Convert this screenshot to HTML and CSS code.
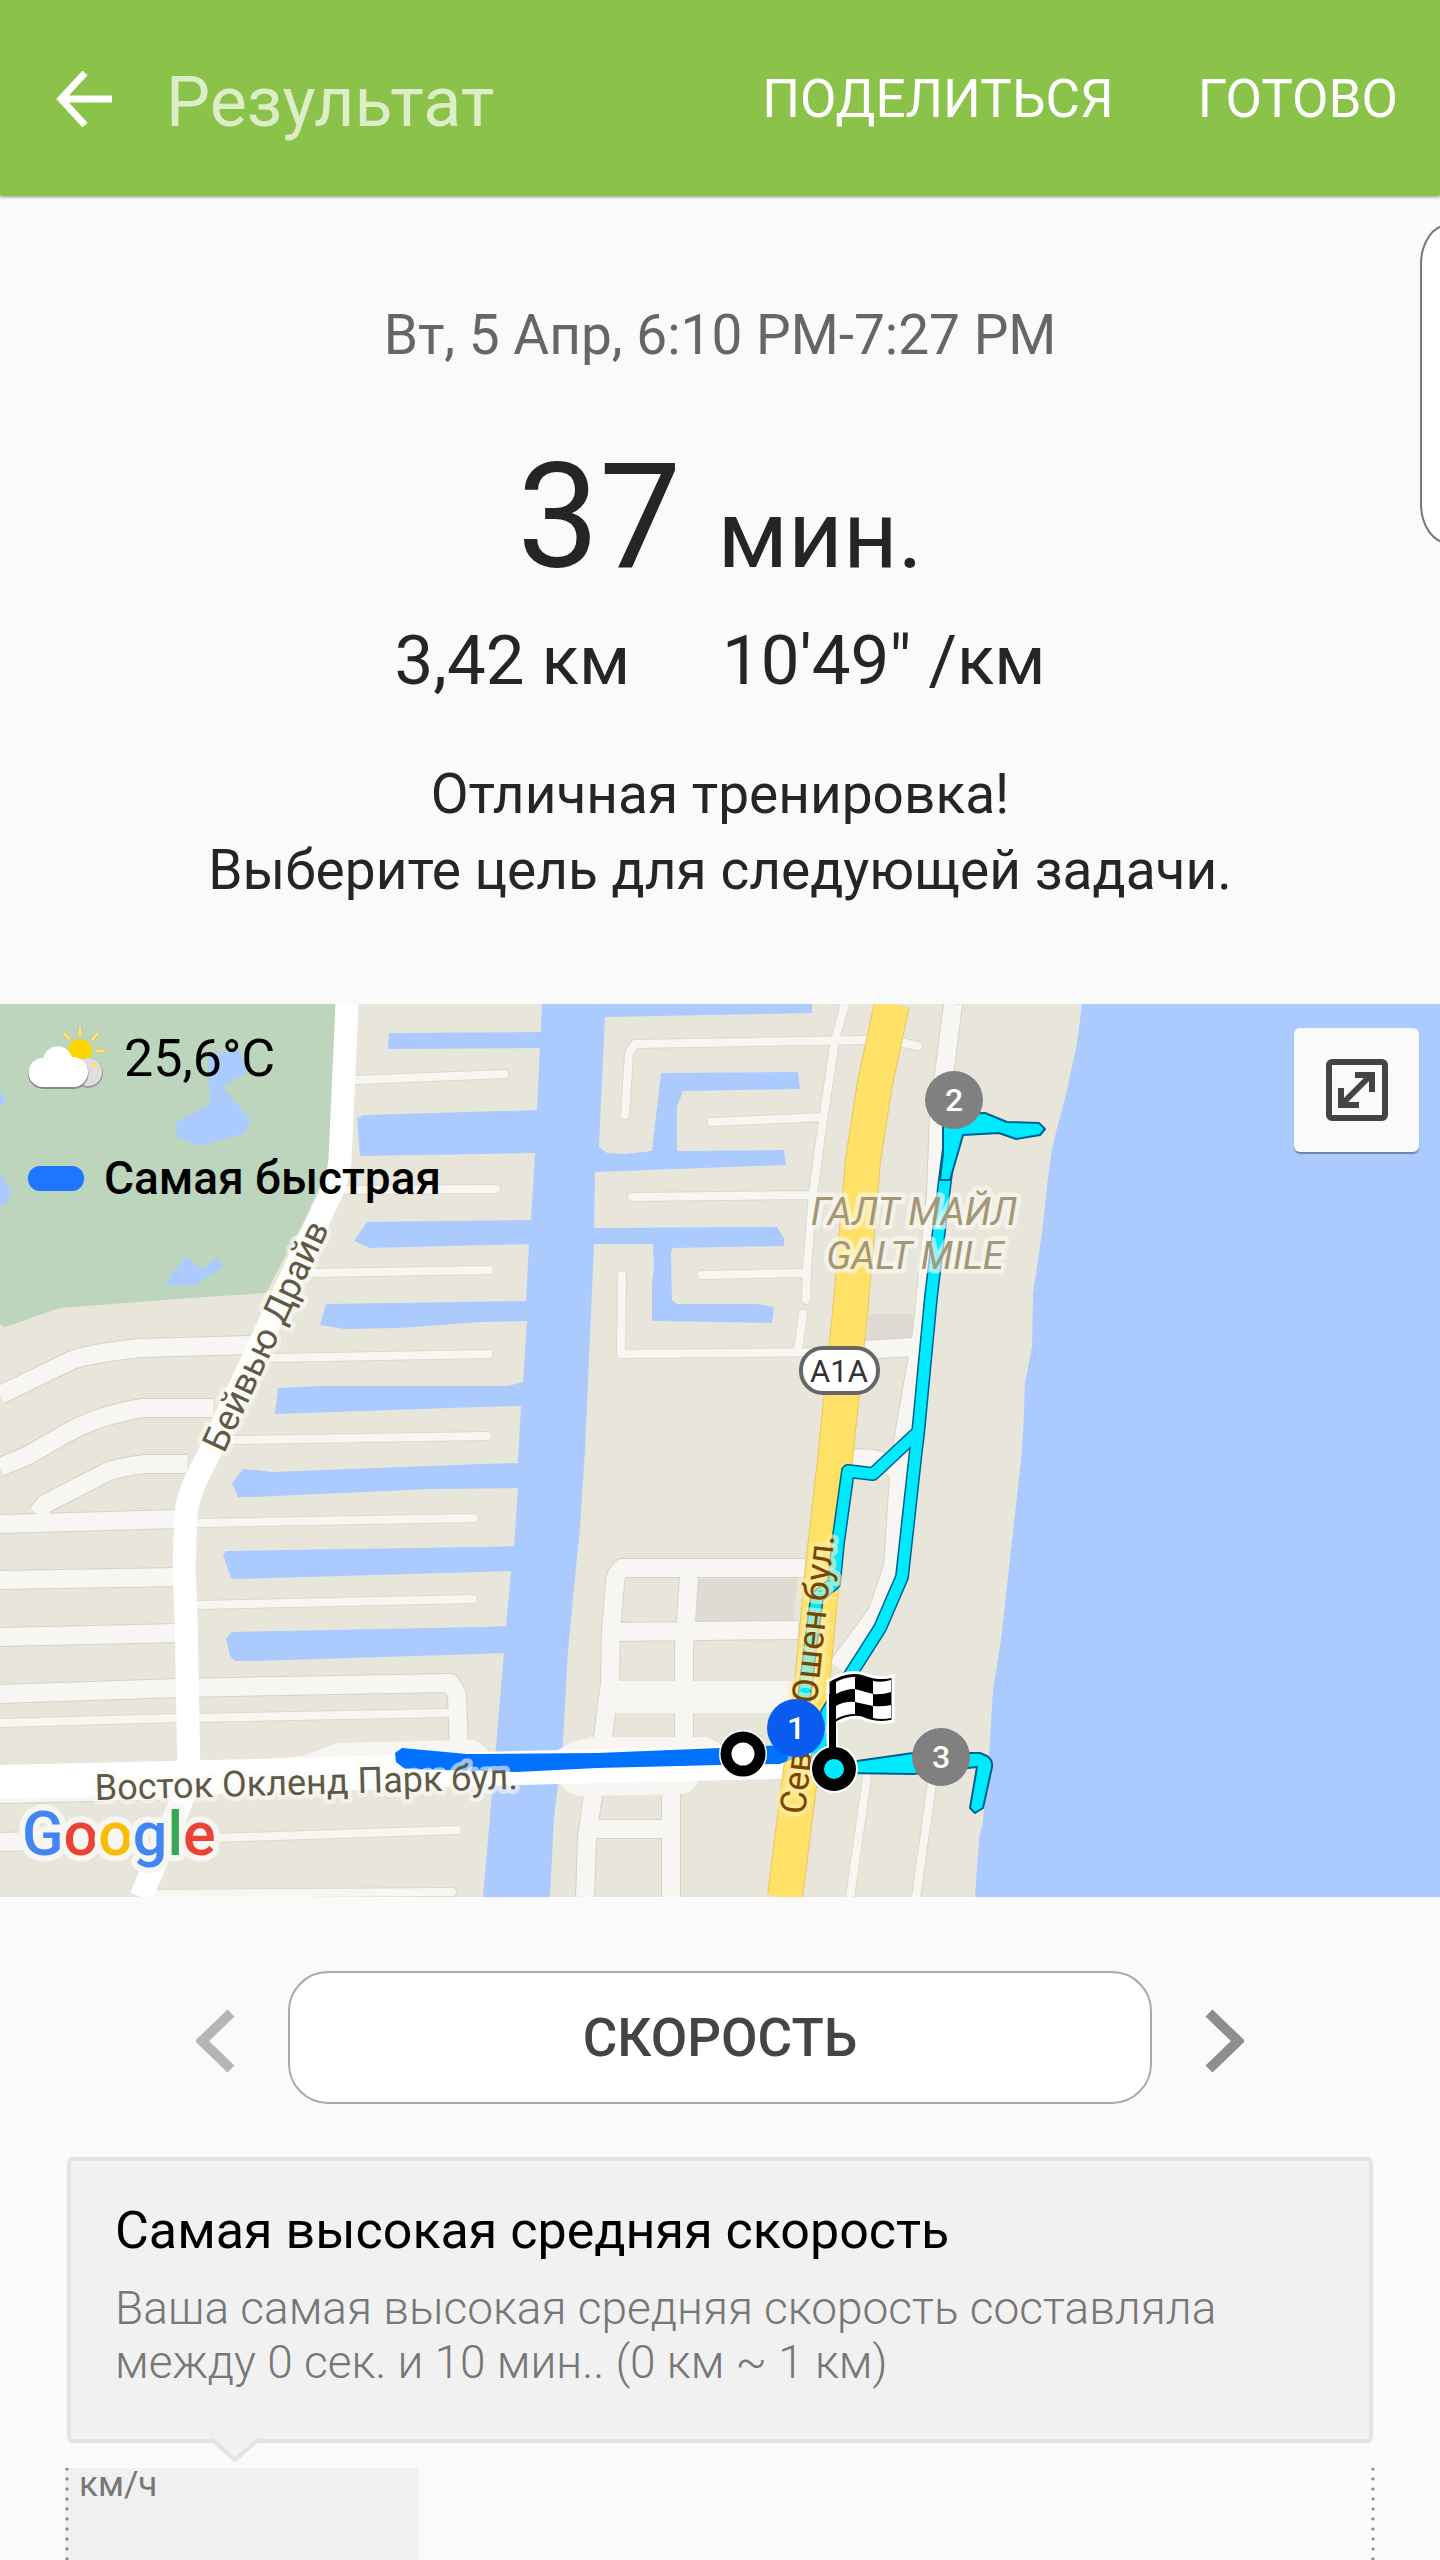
FILE: index.html
```html
<!DOCTYPE html>
<html lang="ru">
<head>
    <meta charset="UTF-8">
    <meta name="viewport" content="width=device-width, initial-scale=1.0">
    <title>Результат</title>
    <link rel="stylesheet" href="styles.css">
</head>
<body>
    <header class="topbar">
        <button class="back" aria-label="Назад">
            <svg width="56" height="56" viewBox="0 0 56 56">
                <path d="M29 2 L5 28 L29 54 M4 28 H56" fill="none" stroke="#fff" stroke-width="7"/>
            </svg>
        </button>
        <h1>Результат</h1>
        <button class="action">ПОДЕЛИТЬСЯ</button>
        <button class="action">ГОТОВО</button>
    </header>

    <div class="edge-handle"></div>

    <main>
        <section class="summary">
            <p class="date">Вт, 5 Апр, 6:10 PM-7:27 PM</p>
            <p class="duration">37 <span>мин.</span></p>
            <p class="stats"><span>3,42 км</span><span>10'49" /км</span></p>
            <p class="message">Отличная тренировка!<br>Выберите цель для следующей задачи.</p>
        </section>

        <section class="map">
            <svg class="map-canvas" viewBox="0 0 1440 893">
                <rect class="land" width="1440" height="893"/>

                <!-- park -->
                <path class="park" d="M0 0H336L330 160L305 215L266 289L190 294L60 304L5 323L0 320Z"/>

                <!-- ocean, canals and ponds -->
                <g class="water">
                    <path d="M1082 0L1077 39L1067 86L1062 106L1057 124L1052 146L1048 173L1042 229L1033 289L1032 343L1025 379L1023 429L1021 456L1001 636L993 686L989 753L983 816L979 836L975 893H1440V0Z"/>
                    <path d="M542 0L537 105L535 150L531 216L529 240L526 297L527 318L523 378L521 403L518 456L518 484L514 542L511 568L506 622L504 649L483 893H550L554 813L563 739L568 646L580 523L585 446L587 400L594 240V224L595 168L599 142L605 13L812 9V0Z"/>
                    <path d="M389 29L545 28V44L388 45Z"/>
                    <path d="M357 114L364 111L540 106V149L360 152Z"/>
                    <path d="M354 237L367 218L535 216V240L370 244Z"/>
                    <path d="M326 300L530 297V317L480 318L400 324L345 325L320 321Z"/>
                    <path d="M278 384L320 382L507 382L524 378V402L480 403L275 410Z"/>
                    <path d="M243 465L273 468L480 460L522 459V484L430 485L253 493H238L232 479Z"/>
                    <path d="M223 551L226 547L480 543L518 542L514 567L480 568L236 575L231 574Z"/>
                    <path d="M226 635L232 628L480 623L510 622L507 649L480 650L255 657H235L230 652Z"/>
                    <path d="M590 143L599 143L607 149L625 150L652 147L661 69L798 68L800 85L683 87L677 103V147L784 146L786 161L595 168L588 168Z"/>
                    <path d="M588 224H595L777 223L784 234V242L673 244L671 248L672 296L677 300L757 300L774 303L772 319L652 317V279L654 263L653 240H588Z"/>
                    <path d="M208 51L240 46L247 68L222 83L251 116L245 129L201 142L177 133L175 119L210 100Z"/>
                    <path d="M165 281L170 273L186 252L202 266L218 253L223 263L193 282Z"/>
                    <path d="M0 85L6 98L0 103ZM0 170L11 187L8 197L0 203Z"/>
                </g>

                <!-- buildings -->
                <path class="building" d="M698 575H797L794 616L696 618ZM869 310H913L912 335L865 338Z"/>

                <!-- side streets: the casing first, then the fill -->
                <defs>
                    <g id="streets" fill="none" stroke-linejoin="round">
                        <path d="M0 391L70 357Q85 350 140 344L250 341M0 463L27 452L65 430Q98 411 143 404L213 404M37 510L45 500L107 468Q120 463 145 460H187M0 520L178 515M0 576L178 573M0 633L178 629M0 690L178 684L450 679L457 690L459 746M0 838L130 834M0 790L180 786"/>
                        <path d="M830 348L912 343M953 0L939 110L936 190L922 329L905 426L899 471L893 563L877 609L837 663M850 455Q890 450 901 475"/>
                        <path d="M805 564H622Q615 570 615 579L611 626L610 679L602 740M612 628L798 626M689 573L684 646V740M593 790L587 834L585 893M671 790V893M588 825H671"/>
                    </g>
                    <g id="lanes" fill="none" stroke-linecap="round" stroke-linejoin="round">
                        <path d="M355 76L504 70M347 186L496 185M313 269L489 266M273 354L488 350M233 436L487 432M197 519L474 514M197 601L473 595M0 719L178 714M197 714L447 709M213 834L457 826M150 890L452 888"/>
                        <path d="M625 111L629 49L635 40L868 36M900 38L918 42M845 0L835 36L823 116L813 189L807 263L806 296M712 118L823 113M632 193L810 191M702 271L807 269M622 271L621 350L830 348M803 310L798 346M867 773L850 893M932 779L916 893"/>
                    </g>
                </defs>
                <use href="#streets" stroke="#d5d2c6" stroke-width="20"/>
                <use href="#lanes" stroke="#dbd9ce" stroke-width="10"/>
                <path d="M610 693H795" stroke="#f7f6f2" stroke-width="32"/>
                <use href="#streets" stroke="#f7f6f2" stroke-width="18"/>
                <use href="#lanes" stroke="#f7f6f2" stroke-width="8"/>
                <path fill="#f7f6f2" d="M273 755L303 752L337 739L475 736L488 746V765H273ZM558 746L572 738L593 733H707L720 740V774L700 776L690 788L680 790L580 792L568 788L558 777Z"/>

                <!-- main roads -->
                <path class="road" d="M347 0L340 156Q338 178 326 200L265 329L206 456Q189 486 186 509L184 563L186 613L189 770L182 796L141 893" stroke-width="23"/>
                <path class="road" d="M0 778L300 771L480 765L815 757" stroke-width="34"/>
                <path class="highway-edge" d="M892 0L875 79L863 156L850 309L835 456L823 563L812 679L795 813L785 893"/>
                <path class="highway" d="M892 0L875 79L863 156L850 309L835 456L823 563L812 679L795 813L785 893"/>

                <!-- track -->
                <path fill="#0072ff" d="M395 749L402 744L467 750H480L597 749L720 744L800 740V752L780 760L720 761L597 764L517 768L405 765L396 758Z"/>
                <defs>
                    <path id="track" d="M951 130L945 176L931 293L918 430L916 446L902 573L880 624L852 668L827 709L817 756M918 428L873 470L848 467L838 539L834 579L817 593L810 646L803 703" fill="none" stroke-linejoin="round"/>
                </defs>
                <use href="#track" stroke="#005f8f" stroke-width="14"/>
                <use href="#track" stroke="#00eaff" stroke-width="11"/>
                <g fill="#00eaff" stroke="#005f8f" stroke-width="2" stroke-linejoin="round">
                    <path d="M943 110L985 109L1007 118L1039 119L1045 125L1040 131L1016 135L999 129L963 131L957 152L950 176L940 176L943 150Z"/>
                    <path d="M845 758L857 757L913 749H980L987 752Q993 756 992 763L983 804L975 809L970 804L977 763L913 770L845 769Z"/>
                </g>

                <!-- labels -->
                <g class="label area">
                    <text x="914" y="221" text-anchor="middle">ГАЛТ МАЙЛ</text>
                    <text x="915" y="265" text-anchor="middle">GALT MILE</text>
                </g>
                <text class="label" transform="translate(224 450) rotate(-65)">Бейвью Драйв</text>
                <text class="label" transform="translate(95 796) rotate(-1.5)">Восток Окленд Парк бул.</text>
                <text class="label avenue" transform="translate(805 811) rotate(-84)">Север Ошен бул.</text>

                <rect x="801" y="344" width="77" height="45" rx="22" fill="#fff" stroke="#666" stroke-width="4"/>
                <text class="shield" x="839" y="378" text-anchor="middle">A1A</text>

                <!-- kilometre marks -->
                <g class="mark">
                    <circle cx="954" cy="96" r="29" fill="#808080"/>
                    <text x="954" y="107">2</text>
                    <circle cx="941" cy="753" r="29" fill="#808080"/>
                    <text x="941" y="764">3</text>
                    <circle cx="796" cy="724" r="29" fill="#0a5cf0"/>
                    <text x="796" y="735">1</text>
                </g>

                <!-- start and finish -->
                <circle cx="743" cy="750" r="17" fill="#fff" stroke="#fff" stroke-width="14"/>
                <circle cx="743" cy="750" r="17" fill="#fff" stroke="#000" stroke-width="11"/>
                <path d="M828 745V677Q848 665 864 670Q880 676 893 672V717Q878 721 862 714Q850 711 836 719V745Z" stroke="#fff" stroke-width="3"/>
                <circle cx="834" cy="765" r="17" fill="#fff" stroke="#fff" stroke-width="14"/>
                <circle cx="834" cy="765" r="16" fill="#00eaff" stroke="#000" stroke-width="12"/>
                <path d="M829 690h7v60h-7z"/>
                <path fill="#fff" d="M836 678Q845 673 855 673V685Q845 685 836 690ZM873 677Q882 679 891 676V688Q882 691 873 690ZM855 685L873 690V702L855 698ZM836 702Q845 697 855 698V710Q845 710 836 715ZM873 702Q882 703 891 701V714Q882 716 873 714Z"/>

                <text class="logo" x="22" y="851"><tspan fill="#4285f4">G</tspan><tspan fill="#ea4335">o</tspan><tspan fill="#fbbc05">o</tspan><tspan fill="#4285f4">g</tspan><tspan fill="#34a853">l</tspan><tspan fill="#ea4335">e</tspan></text>
            </svg>

            <div class="map-info">
                <div class="weather">
                    <svg width="80" height="66" viewBox="0 0 80 66">
                        <g stroke="#c9b04a" stroke-width="4">
                            <path d="M52 1v9M36 7l6 7M70 7l-6 7M68 25h9"/>
                        </g>
                        <g stroke="#ffe37a" stroke-width="3">
                            <path d="M52 1v9M36 7l6 7M70 7l-6 7M68 25h9"/>
                        </g>
                        <circle cx="52" cy="25" r="12" fill="#ffd500"/>
                        <circle cx="60" cy="47" r="15" fill="#9a9a9a"/>
                        <circle cx="60" cy="46" r="14" fill="#dedede"/>
                        <path d="M63 36l6 6" stroke="#ffe37a" stroke-width="3"/>
                        <path d="M15 63a15 15 0 0 1 0-30A15 15 0 0 1 44 32A15 15 0 0 1 46 63Z" fill="#8a8a8a"/>
                        <path d="M15 61a14 14 0 0 1 0-29A15 15 0 0 1 44 31A15 15 0 0 1 46 61Z" fill="#fff"/>
                    </svg>
                    <span>25,6°C</span>
                </div>
                <div class="legend"><i></i><span>Самая быстрая</span></div>
            </div>

            <button class="expand" aria-label="Развернуть карту">
                <svg width="62" height="62" viewBox="0 0 62 62">
                    <rect x="3" y="3" width="56" height="56" rx="3" fill="none" stroke="#444" stroke-width="6"/>
                    <path d="M17 44L44 17M29 16H46V33M15 29V46H33" fill="none" stroke="#444" stroke-width="6"/>
                </svg>
            </button>
        </section>

        <section class="switcher">
            <button class="arrow prev" aria-label="Предыдущий показатель">
                <svg width="40" height="64" viewBox="0 0 40 64">
                    <path d="M35 4L6 32L35 60" fill="none" stroke="currentColor" stroke-width="10"/>
                </svg>
            </button>
            <button class="metric">СКОРОСТЬ</button>
            <button class="arrow next" aria-label="Следующий показатель">
                <svg width="40" height="64" viewBox="0 0 40 64">
                    <path d="M5 4L34 32L5 60" fill="none" stroke="currentColor" stroke-width="10"/>
                </svg>
            </button>
        </section>

        <section class="details">
            <div class="tip">
                <h2>Самая высокая средняя скорость</h2>
                <p>Ваша самая высокая средняя скорость составляла<br>между 0 сек. и 10 мин.. (0 км ~ 1 км)</p>
                <svg class="tip-tail" width="50" height="25" viewBox="0 0 50 25">
                    <path d="M0 0H50L25 24Z" fill="#f1f1f1"/>
                    <path d="M1 2L25 23L49 2" fill="none" stroke="#e3e3e3" stroke-width="4"/>
                </svg>
            </div>
            <div class="chart">
                <div class="chart-range">км/ч</div>
            </div>
        </section>
    </main>
</body>
</html>
```

FILE: styles.css
```css
* {
    box-sizing: border-box;
}

html {
    height: 100%;
}

body {
    font-family: Roboto, "Noto Sans", sans-serif;
    margin: 0;
    min-height: 100%;
    background-color: #fafafa;
    color: #252525;
    display: flex;
    flex-direction: column;
    overflow: hidden;
}

h1, h2, p {
    margin: 0;
    font-weight: 400;
}

button {
    font-family: inherit;
    border: none;
    background: none;
    padding: 0;
    cursor: pointer;
}

svg {
    display: block;
}

.topbar {
    display: flex;
    align-items: center;
    height: 196px;
    padding: 2px 42px 0 56px;
    background-color: #8bc34a;
    box-shadow: 0 1px 3px rgba(0, 0, 0, 0.4);
}

.topbar h1 {
    flex: 1;
    margin-left: 54px;
    padding-top: 6px;
    font-size: 70px;
    line-height: 84px;
    color: #dcedc8;
}

.action {
    margin-left: 84px;
    font-size: 53px;
    line-height: 64px;
    color: #fff;
}

/* edge panel tab, half of it lies past the screen */
.edge-handle {
    position: absolute;
    top: 224px;
    right: -40px;
    width: 60px;
    height: 320px;
    border: 2px solid #777;
    border-radius: 28px / 40px;
    background-color: #fff;
}

main {
    flex: 1;
    display: flex;
    flex-direction: column;
}

.summary {
    padding: 106px 40px 96px;
    text-align: center;
}

.date {
    font-size: 55px;
    line-height: 66px;
    color: #666;
}

.duration {
    margin-top: 66px;
    font-size: 146px;
    line-height: 168px;
}

.duration span {
    font-size: 95px;
}

.stats {
    display: flex;
    justify-content: center;
    gap: 92px;
    font-size: 69px;
    line-height: 84px;
}

.message {
    margin-top: 53px;
    font-size: 55px;
    line-height: 76px;
}

.map {
    position: relative;
    overflow: hidden;
}

.map-canvas {
    width: 100%;
    height: auto;
}

.land {
    fill: #e8e6da;
}

.park {
    fill: #bcd5bc;
}

.water {
    fill: #abcbff;
}

.building {
    fill: #dddbd3;
}

.road {
    fill: none;
    stroke: #fff;
    stroke-linejoin: round;
}

.highway,
.highway-edge {
    fill: none;
    stroke: #ffe168;
    stroke-width: 34px;
    stroke-linejoin: round;
}

.highway-edge {
    stroke: #e9c660;
    stroke-width: 36px;
}

.label {
    font-size: 36px;
    fill: #5f5a47;
    stroke: #fbfaf5;
    stroke-opacity: 0.6;
    stroke-width: 9px;
    stroke-linejoin: round;
    paint-order: stroke;
}

.area {
    font-size: 38px;
    font-style: italic;
    fill: #a39775;
}

.avenue {
    fill: #7a4500;
    stroke: #ffeeb0;
}

.shield {
    font-size: 31px;
    fill: #333;
}

.mark text {
    font-size: 32px;
    font-weight: 500;
    fill: #fff;
    text-anchor: middle;
}

.logo {
    font-size: 61px;
    font-weight: 500;
    stroke: #f7f6f2;
    stroke-width: 12px;
    stroke-linejoin: round;
    paint-order: stroke;
}

.map-info {
    position: absolute;
    top: 22px;
    left: 28px;
    color: #000;
}

.weather {
    display: flex;
    align-items: center;
    gap: 16px;
    font-size: 52px;
    line-height: 66px;
}

.legend {
    display: flex;
    align-items: center;
    gap: 20px;
    margin-top: 60px;
    font-size: 46px;
    font-weight: 500;
    line-height: 52px;
}

.legend i {
    width: 56px;
    height: 25px;
    border-radius: 12px;
    background-color: #1f75fe;
}

.expand {
    position: absolute;
    top: 24px;
    right: 21px;
    display: flex;
    align-items: center;
    justify-content: center;
    width: 125px;
    height: 124px;
    border-radius: 6px;
    background-color: #fafafa;
    box-shadow: 0 2px 1px rgba(0, 0, 0, 0.35);
}

.switcher {
    display: flex;
    align-items: center;
    justify-content: center;
    gap: 52px;
    padding: 74px 0 53px;
}

.arrow {
    padding-top: 6px;
    color: #b5b5b5;
}

.next {
    color: #8e8e8e;
}

.metric {
    width: 60%;
    height: 133px;
    border: 2px solid #aaa;
    border-radius: 40px;
    background-color: #fff;
    color: #444;
    font-size: 53px;
    font-weight: 500;
}

.details {
    flex: 1;
    display: flex;
    flex-direction: column;
    padding: 0 67px;
}

.tip {
    position: relative;
    padding: 38px 44px 50px;
    border: 4px solid #e3e3e3;
    border-radius: 6px;
    background-color: #f1f1f1;
}

.tip h2 {
    font-size: 52px;
    line-height: 64px;
    color: #000;
}

.tip p {
    margin-top: 18px;
    font-size: 46px;
    font-weight: 300;
    line-height: 54px;
    color: #777;
}

.tip-tail {
    position: absolute;
    top: 100%;
    left: 139px;
    margin-top: -2px;
}

.chart {
    flex: 1;
    min-height: 92px;
    margin: 25px -2px 0;
    background:
        radial-gradient(circle, #888 1px, transparent 2px) 0 6px / 4px 10px repeat-y,
        radial-gradient(circle, #888 1px, transparent 2px) 100% 6px / 4px 10px repeat-y;
}

.chart-range {
    width: 27%;
    height: 100%;
    min-height: 92px;
    padding-left: 14px;
    background-color: rgba(0, 0, 0, 0.04);
    color: #777;
    font-size: 35px;
    line-height: 34px;
}
```
